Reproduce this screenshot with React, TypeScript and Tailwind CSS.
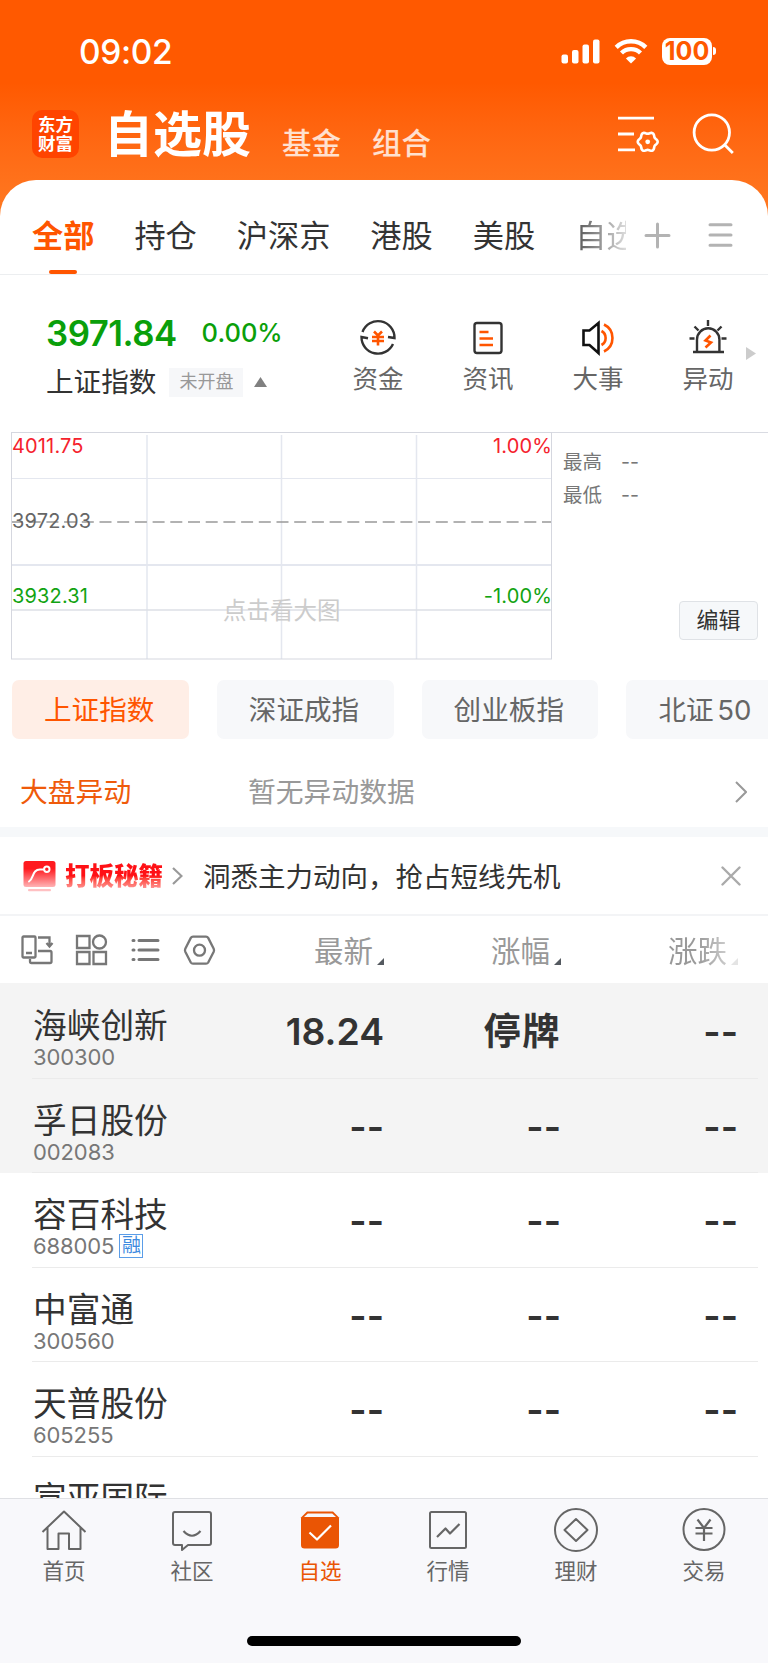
import type { ReactNode } from "react";

const font = "font-[Inter,'Noto_Sans_CJK_SC',sans-serif]";

const tabs = ["持仓", "沪深京", "港股", "美股"];
const chips = ["上证指数", "深证成指", "创业板指", "北证 50"];

type Stock = {
  name: string;
  code: string;
  last?: string;
  change?: string;
  margin?: boolean;
  shaded?: boolean;
};

const stocks: Stock[] = [
  { name: "海峡创新", code: "300300", last: "18.24", change: "停牌", shaded: true },
  { name: "孚日股份", code: "002083", shaded: true },
  { name: "容百科技", code: "688005", margin: true },
  { name: "中富通", code: "300560" },
  { name: "天普股份", code: "605255" },
  { name: "宣亚国际", code: "300612" },
];

// soft gear outline with six lobes
const gearPoints = Array.from({ length: 72 }, (_, i) => {
  const angle = (i / 72) * Math.PI * 2;
  const r = 9 + 0.95 * Math.cos(angle * 6);
  return `${(29.7 + r * Math.cos(angle)).toFixed(2)},${(28.8 + r * Math.sin(angle)).toFixed(2)}`;
}).join(" ");

const StatusBar = () => (
  <div className="flex h-[102px] justify-between pl-[79px] pr-[52px] text-white">
    <div className="mt-[35px] text-[33.5px] leading-[35px] font-medium tracking-[-0.4px]">
      09:02
    </div>
    <div className="mt-[37px] flex h-7 items-center">
      <svg width="39" height="25" viewBox="0 0 39 25" fill="currentColor">
        <rect x="0.5" y="15.5" width="6.5" height="9" rx="2" />
        <rect x="11" y="11" width="6.5" height="13.5" rx="2" />
        <rect x="21.5" y="5.5" width="6.5" height="19" rx="2" />
        <rect x="32" y="0.5" width="6.5" height="24" rx="2" />
      </svg>
      <svg className="ml-[14px]" width="34" height="25" viewBox="0 0 34 25" fill="none" stroke="currentColor" strokeWidth="4.4">
        <path d="M2.2 8.4a21 21 0 0 1 29.6 0" />
        <path d="M7.5 14a13.6 13.6 0 0 1 19 0" />
        <path d="M17 24.6l-5.1-5.2a7.3 7.3 0 0 1 10.2 0z" fill="currentColor" stroke="none" />
      </svg>
      <div className="ml-[14px] flex h-[27px] w-[50px] items-center justify-center rounded-[8px] bg-white text-[25px] leading-[27px] font-bold text-[#ff5900]">
        100
      </div>
      <div className="ml-[1px] h-[8px] w-[3px] rounded-r-full bg-white" />
    </div>
  </div>
);

const TitleBar = () => (
  <div className="flex h-[78px] pl-[32px] text-white">
    <div className="mt-[8px] flex h-[48px] w-[47px] flex-col items-center justify-center rounded-[10px] bg-[#ff4400] text-[17.5px] leading-[19px] font-bold">
      <span>东方</span>
      <span>财富</span>
    </div>
    <div className="mt-[8px] ml-[25px] text-[49px] leading-[49px] font-bold">自选股</div>
    <div className="mt-[27px] ml-[31px] text-[29.5px] leading-[29px] font-medium text-white/80">基金</div>
    <div className="mt-[27px] ml-[31px] text-[29.5px] leading-[29px] font-medium text-white/80">组合</div>
    <svg className="mt-[11px] ml-auto" width="43" height="43" viewBox="0 0 43 43" fill="none" stroke="currentColor" strokeWidth="2.8">
      <path d="M0 5.2h36M0 21h16M0 36.8h17" />
      <polygon points={gearPoints} strokeWidth="2.6" strokeLinejoin="round" />
      <circle cx="29.7" cy="28.8" r="2.4" fill="currentColor" stroke="none" />
    </svg>
    <svg className="mt-[10px] mr-[32px] ml-[31px]" width="44" height="44" viewBox="0 0 44 44" fill="none" stroke="currentColor" strokeWidth="2.8">
      <circle cx="19.8" cy="20.5" r="17.7" />
      <path d="M32.3 32.5l8.500 8.500" />
    </svg>
  </div>
);

const Tabs = () => (
  <div className="flex h-[95px] border-b border-[#eceef0] pl-[32px] text-[31.2px] leading-[31px] text-[#333]">
    <div className="flex flex-col items-center">
      <span className="mt-[41px] font-bold text-[#ff5500]">全部</span>
      <span className="mt-auto h-[4px] w-[28px] rounded-full bg-[#ff5500]" />
    </div>
    {tabs.map((tab) => (
      <span key={tab} className="mt-[41px] ml-[40px]">
        {tab}
      </span>
    ))}
    <span className="mt-[36px] ml-[40px] h-[42px] w-[51px] overflow-hidden bg-linear-to-r from-[#555] to-[#ddd] bg-clip-text pt-[5px] whitespace-nowrap text-transparent">
      自选
    </span>
    <svg className="mt-[42px] ml-[18px]" width="27" height="27" viewBox="0 0 27 27" stroke="#b3b3b3" strokeWidth="3" strokeLinecap="round">
      <path d="M2 13.500h23M13.500 2v23" />
    </svg>
    <svg className="mt-[42px] ml-[37px]" width="26" height="27" viewBox="0 0 26 27" stroke="#b3b3b3" strokeWidth="3" strokeLinecap="round">
      <path d="M2 2.800h21M2 13h21M2 23.200h21" />
    </svg>
  </div>
);

const Shortcut = ({ label, children }: { label: string; children: ReactNode }) => (
  <div className="flex w-[110px] flex-col items-center">
    <svg width="40" height="40" viewBox="0 0 40 40" fill="none" stroke="#333" strokeWidth="2.4">
      {children}
    </svg>
    <span className="mt-[8px] text-[25.5px] leading-[26px] text-[#666]">{label}</span>
  </div>
);

const Quote = () => (
  <div className="flex h-[157px]">
    <div className="w-[323px] pl-[46px]">
      <div className="mt-[41px] flex h-[34px] text-[#0a9f0a]">
        <span className="text-[34.8px] leading-[34px] font-semibold tracking-[-0.5px]">3971.84</span>
        <span className="ml-[25px] text-[25.5px] leading-[34px] font-medium">0.00%</span>
      </div>
      <div className="mt-[17px] flex h-[30px] items-center">
        <span className="text-[27.6px] leading-[28px] text-[#333]">上证指数</span>
        <span className="ml-[13px] flex h-[29px] w-[74px] items-center justify-center bg-[#f6f7f9] text-[18px] leading-[20px] text-[#999]">
          未开盘
        </span>
        <svg className="ml-[11px]" width="13" height="10" viewBox="0 0 13 10" fill="#808080">
          <path d="M6.500 0l6.500 10H0z" />
        </svg>
      </div>
    </div>
    <div className="mt-[43px] flex">
      <Shortcut label="资金">
        <path d="M4.500 14A16.500 16.500 0 0 1 36.500 20l-6.500-1M35 26A16.500 16.500 0 0 1 3.500 19l6.500 1.200" />
        <path d="M16 13.500l4 4 4-4M14 19h12M14 23h12M20 18v9.500" stroke="#ff5500" strokeWidth="2.6" />
      </Shortcut>
      <Shortcut label="资讯">
        <rect x="6.500" y="5" width="27" height="30" rx="2.500" />
        <path d="M11.500 14h9M11.500 20.500h13.500M11.500 27h13.500" stroke="#ff5500" strokeWidth="2.4" />
      </Shortcut>
      <Shortcut label="大事">
        <path d="M5.500 12.500h6l9-7.500v30l-9-8h-6z" stroke="#111" strokeWidth="2.6" />
        <path d="M23.500 13a8 8 0 0 1 0 14M26 6.500a15 15 0 0 1 0 27" stroke="#ff5500" strokeWidth="2.6" />
      </Shortcut>
      <Shortcut label="异动">
        <path d="M9 34V21.500a11.200 11.200 0 0 1 22.400 0V34M5 34h31M20 2v6M6.500 8.500l4 4M33.500 8.500l-4 4M1.500 20.500h5M33.500 20.500h5" />
        <path d="M22.500 17.500l-5 5 5.500 2-5.500 5" stroke="#ff5500" strokeWidth="2.6" />
      </Shortcut>
    </div>
    <svg className="mt-[72px] -ml-[17px]" width="10" height="13" viewBox="0 0 10 13" fill="#ccc">
      <path d="M0 0l10 6.500L0 13z" />
    </svg>
  </div>
);

const Chart = () => (
  <div className="flex h-[228px] pl-[11px]">
    <div className="relative h-[228px] w-[541px] text-[20px] leading-[20px] tracking-[0.15px]">
      <svg width="541" height="228" viewBox="0 0 541 228" fill="none" stroke="#e4e7ef">
        <path d="M0 46.500h541" strokeWidth="1" />
        <path d="M0 133h541" strokeWidth="2" />
        <path d="M136 3v224M270.500 3v224M405.500 3v224" strokeWidth="1.5" />
        <path d="M0 178h541" stroke="#dcdfe6" strokeWidth="1.5" />
        <path d="M0 90h541" stroke="#999" strokeWidth="1.7" strokeDasharray="12 5.7" />
        <path d="M0 .500h541M.5 0v227M540.500 1v226M0 227h541" stroke="#d5d7df" />
      </svg>
      <span className="absolute top-[4px] left-px text-[#f5222d]">4011.75</span>
      <span className="absolute top-[79px] left-px text-[#666]">3972.03</span>
      <span className="absolute top-[154px] left-px text-[#12a312]">3932.31</span>
      <span className="absolute top-[4px] right-0 text-[#f5222d]">1.00%</span>
      <span className="absolute top-[154px] right-0 text-[#12a312]">-1.00%</span>
      <span className="absolute top-[167px] left-[212px] text-[23.5px] leading-[24px] tracking-normal text-[#ccc]">
        点击看大图
      </span>
    </div>
    <div className="flex flex-1 flex-col border-t border-[#d9dbe2] pt-[19px] pr-[10px] pl-[11px] text-[19.5px] leading-[20px] text-[#777]">
      <div className="flex gap-[19px]">
        <span>最高</span>
        <span>--</span>
      </div>
      <div className="mt-[13px] flex gap-[19px]">
        <span>最低</span>
        <span>--</span>
      </div>
      <button className="mt-[96px] ml-auto h-[39px] w-[79px] rounded-[4px] border border-[#dfe2e6] bg-[#f6f8fa] pb-[2px] text-[22px] leading-[24px] text-[#333]">
        编辑
      </button>
    </div>
  </div>
);

const Banner = () => (
  <div className="flex h-[79px] items-center border-b-2 border-[#f3f4f6] pl-[23px]">
    <svg className="mt-[2px]" width="33" height="31" viewBox="0 0 33 31" fill="none">
      <defs>
        <linearGradient id="badge" x1="0" y1="0" x2="0" y2="1">
          <stop offset=".3" stopColor="#ff1a1f" />
          <stop offset="1" stopColor="#ffb3b5" />
        </linearGradient>
      </defs>
      <rect x=".5" y="0" width="32" height="26" rx="2.5" fill="url(#badge)" />
      <rect x="5" y="28" width="23" height="2.2" rx="1" fill="#ffc0c2" />
      <path d="M6 20.500c5-3 3-12 11-12h4" stroke="#fff" strokeWidth="2" strokeLinecap="round" />
      <circle cx="23.8" cy="8.3" r="2.7" stroke="#fff" strokeWidth="2" />
    </svg>
    <span className="mt-[1px] ml-[9px] bg-linear-to-b from-[#ff1015] from-50% to-[#ff9a9c] bg-clip-text text-[24.5px] leading-[28px] font-black text-transparent">
      打板秘籍
    </span>
    <svg className="ml-[9px]" width="11" height="18" viewBox="0 0 11 18" fill="none" stroke="#999" strokeWidth="2.2">
      <path d="M1 1l8.500 8L1 17" />
    </svg>
    <span className="mt-[2px] ml-[20px] text-[27.5px] leading-[28px] text-[#333]">洞悉主力动向，抢占短线先机</span>
    <svg className="mt-px mr-[27px] ml-auto" width="20" height="20" viewBox="0 0 20 20" stroke="#aaa" strokeWidth="2.4" strokeLinecap="round">
      <path d="M1.500 1.500l17 17M18.500 1.500l-17 17" />
    </svg>
  </div>
);

const SortMark = ({ className }: { className: string }) => (
  <svg className={className} width="7" height="7" viewBox="0 0 7 7" fill="currentColor">
    <path d="M7 0v7H0z" />
  </svg>
);

const TableHead = () => (
  <div className="flex h-[67px] pt-[18px] pl-[21px]">
    <svg width="196" height="32" viewBox="0 0 196 32" fill="none" stroke="#777" strokeWidth="2.3">
      <rect x="1.500" y="2.500" width="13" height="21" rx="1" />
      <path d="M5 19h6M17 3.500h11.500v8M25.500 9l3 3.500 3-3.500M17 17h12a1.500 1.500 0 0 1 1.500 1.500v9A1.500 1.500 0 0 1 29 29H10.500A1.500 1.500 0 0 1 9 27.500V25" />
      <path d="M56 2h12.500v12H56zM56 18h12.500v12H56zM72.500 18H85v12H72.500z" />
      <circle cx="78.500" cy="8" r="6.500" />
      <path d="M118 6.500h19M118 16h19M118 25.500h19" strokeWidth="3" strokeLinecap="round" />
      <path d="M112 6.500h1M112 16h1M112 25.500h1" strokeWidth="3" strokeLinecap="round" />
      <path
        d="M172.500 2.500h13q1.500 0 2.200 1.200l5.500 10.800q.7 1.500 0 3l-5.500 10.800q-.7 1.200-2.200 1.200h-13q-1.500 0-2.200-1.200l-5.500-10.800q-.7-1.500 0-3l5.500-10.800q.7-1.200 2.200-1.200z"
        transform="translate(-.5 .2)"
      />
      <circle cx="178.500" cy="16.200" r="5.500" />
    </svg>
    <div className="flex flex-1 text-[29.5px] leading-[30px] text-[#999]">
      <div className="flex w-[167px] items-end justify-end pb-[17px]">
        最新
        <SortMark className="mb-[1px] ml-[4px] text-[#555a60]" />
      </div>
      <div className="flex w-[177px] items-end justify-end pb-[17px]">
        涨幅
        <SortMark className="mb-[1px] ml-[4px] text-[#555a60]" />
      </div>
      <div className="flex w-[177px] items-end justify-end pb-[17px]">
        <span className="bg-linear-to-r from-[#999] from-50% to-[#ccc] bg-clip-text text-transparent">涨跌</span>
        <SortMark className="mb-[1px] ml-[4px] text-[#e4e4e4]" />
      </div>
    </div>
  </div>
);

const StockRow = ({ stock }: { stock: Stock }) => (
  <div className={`h-[94.5px] shrink-0 pr-[10px] pl-[32px] ${stock.shaded ? "bg-[#f4f4f4]" : "bg-white"}`}>
    <div className="flex h-full border-b border-[#ebebeb] pl-[1px] text-[#333]">
      <div className="w-[190px] pt-[25px]">
        <div className="text-[33.7px] leading-[34px]">{stock.name}</div>
        <div className="mt-[2px] flex h-[24px] items-center text-[22px] leading-[24px] tracking-[-0.1px] text-[#777]">
          {stock.code}
          {stock.margin && (
            <span className="ml-[5px] flex size-[24px] items-center justify-center border border-[#5b9de8] text-[19px] leading-[22px] text-[#3d8ae0]">
              融
            </span>
          )}
        </div>
      </div>
      <div className="flex flex-1 items-center pt-[3px] text-[37.3px] leading-[38px] font-semibold">
        <span className="w-[161px] text-right">{stock.last ?? "--"}</span>
        <span className={`w-[177px] text-right ${stock.change ? "tracking-[1.5px]" : ""}`}>
          {stock.change ?? "--"}
        </span>
        <span className="w-[177px] text-right">--</span>
      </div>
    </div>
  </div>
);

const NavItem = ({ label, active, children }: { label: string; active?: boolean; children: ReactNode }) => (
  <div className={`flex flex-1 flex-col items-center ${active ? "text-[#ea5504]" : "text-[#666]"}`}>
    <svg width="46" height="46" viewBox="0 0 46 46" fill="none" stroke="currentColor" strokeWidth="2" strokeLinejoin="round">
      {children}
    </svg>
    <span className="mt-[7px] text-[21.5px] leading-[23px]">{label}</span>
  </div>
);

const BottomNav = () => (
  <div className="flex h-[165px] shrink-0 flex-col items-center border-t border-[#dfe0e4] bg-[#f8f8fb]">
    <div className="flex w-full pt-[8px]">
      <NavItem label="首页">
        <path d="M1.500 25L23 4.500 44.500 25M6.500 20.500V42H17.500V26.500h10.500V42h11.500V20.500" />
      </NavItem>
      <NavItem label="社区">
        <path d="M6 5h34q2 0 2 2v29q0 2-2 2H19l-6 5v-5H6q-2 0-2-2V7q0-2 2-2z" />
        <path d="M14.500 24q8.500 9.500 17 0" strokeWidth="2.2" />
      </NavItem>
      <NavItem label="自选" active>
        <path d="M4 10.500l6-6h26l6 6V38q0 3.500-3.500 3.500h-31Q4 41.500 4 38z" fill="currentColor" stroke="none" />
        <path d="M10.800 6.500h24.400l3.800 3.500H7z" fill="#f8f8fb" stroke="none" />
        <path d="M12.500 25.500l7.500 7 14-14" stroke="#fff" strokeWidth="2.2" />
      </NavItem>
      <NavItem label="行情">
        <rect x="5" y="5" width="36" height="36" rx="1.5" />
        <path d="M12 30l8.500-8.500 4.500 5L34.500 17" strokeWidth="2.2" />
      </NavItem>
      <NavItem label="理财">
        <circle cx="23" cy="23" r="21" />
        <path d="M23 12l11.500 11L23 34 11.500 23z" />
      </NavItem>
      <NavItem label="交易">
        <circle cx="23" cy="22.5" r="20.5" />
        <path d="M16.500 12.500l6.500 8.500 6.500-8.500M14.500 21h17M14.500 26.500h17M23 21v13" strokeWidth="2.2" />
      </NavItem>
    </div>
    <div className="mt-auto mb-[17px] h-[10px] w-[274px] rounded-full bg-black" />
  </div>
);

const App = () => {
  return (
    <div className={`flex h-[1663px] w-[768px] flex-col overflow-hidden bg-white ${font}`}>
      <div className="bg-linear-to-b from-[#ff5900] from-30% to-[#ff7a22] to-80%">
        <StatusBar />
        <TitleBar />
        <div className="rounded-t-[36px] bg-white">
          <Tabs />
        </div>
      </div>
      <Quote />
      <Chart />
      <div className="mt-[20px] flex h-[59px] gap-[28px] overflow-hidden pl-[12px]">
        {chips.map((chip, i) => (
          <div
            key={chip}
            className={`flex w-[176.8px] shrink-0 items-center rounded-[7px] pl-[32px] text-[27.6px] leading-[28px] [word-spacing:-4px] ${
              i === 0 ? "bg-[#ffeee6] text-[#ff5500]" : "bg-[#f7f8fa] text-[#666]"
            }`}
          >
            {chip}
          </div>
        ))}
      </div>
      <div className="flex h-[88px] items-center pt-[17px] pl-[20px] text-[27.8px] leading-[28px]">
        <span className="w-[228px] text-[#ef5a0a]">大盘异动</span>
        <span className="text-[#999]">暂无异动数据</span>
        <svg className="mr-[21px] ml-auto" width="12" height="22" viewBox="0 0 12 22" fill="none" stroke="#999" strokeWidth="2">
          <path d="M1 1l10 10L1 21" />
        </svg>
      </div>
      <div className="h-[10px] shrink-0 bg-[#f6f8fa]" />
      <Banner />
      <TableHead />
      <div className="flex min-h-0 flex-1 flex-col overflow-hidden bg-[#f4f4f4] pt-px">
        {stocks.map((stock) => (
          <StockRow key={stock.code} stock={stock} />
        ))}
      </div>
      <BottomNav />
    </div>
  );
};

export default App;
